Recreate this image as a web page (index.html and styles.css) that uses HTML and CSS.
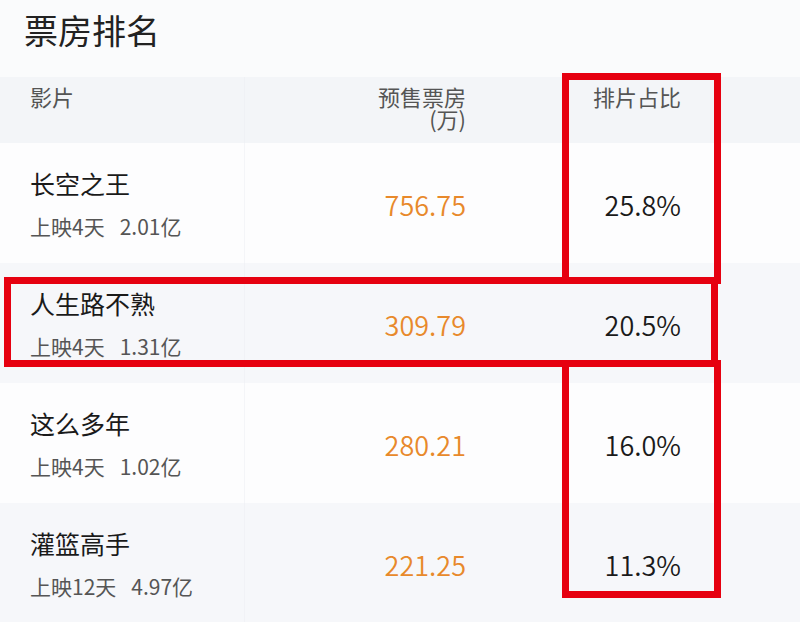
FILE: index.html
```html
<!DOCTYPE html>
<html lang="zh-CN">
<head>
<meta charset="utf-8">
<title>票房排名</title>
<link rel="stylesheet" href="styles.css">
</head>
<body>
<div class="page">
  <h1 class="title">票房排名</h1>
  <div class="table">
    <div class="row head">
      <div class="cell film">影片</div>
      <div class="cell num"><span class="hl">预售票房</span><span class="hl">(万)</span></div>
      <div class="cell pct">排片占比</div>
      <div class="cell rest"></div>
    </div>
    <div class="row">
      <div class="cell film"><div class="name">长空之王</div><div class="sub">上映4天<span class="gap">2.01亿</span></div></div>
      <div class="cell num"><span class="box">756.75</span></div>
      <div class="cell pct"><span class="ratio">25.8%</span></div>
      <div class="cell rest"></div>
    </div>
    <div class="row alt">
      <div class="cell film"><div class="name">人生路不熟</div><div class="sub">上映4天<span class="gap">1.31亿</span></div></div>
      <div class="cell num"><span class="box">309.79</span></div>
      <div class="cell pct"><span class="ratio">20.5%</span></div>
      <div class="cell rest"></div>
    </div>
    <div class="row">
      <div class="cell film"><div class="name">这么多年</div><div class="sub">上映4天<span class="gap">1.02亿</span></div></div>
      <div class="cell num"><span class="box">280.21</span></div>
      <div class="cell pct"><span class="ratio">16.0%</span></div>
      <div class="cell rest"></div>
    </div>
    <div class="row alt">
      <div class="cell film"><div class="name">灌篮高手</div><div class="sub">上映12天<span class="gap">4.97亿</span></div></div>
      <div class="cell num"><span class="box">221.25</span></div>
      <div class="cell pct"><span class="ratio">11.3%</span></div>
      <div class="cell rest"></div>
    </div>
  </div>
  <div class="mark mark-col-top"></div>
  <div class="mark mark-row"></div>
  <div class="mark mark-col-bottom"></div>
</div>
</body>
</html>
```

FILE: styles.css
```css
* { box-sizing: border-box; }
html, body {
  margin: 0;
  padding: 0;
  background: #fafbfc;
}
body {
  font-family: "Noto Sans CJK SC", "Noto Sans", sans-serif;
  color: #1c1c1c;
  width: 800px;
  height: 622px;
  overflow: hidden;
}
.page {
  position: relative;
  width: 800px;
  height: 622px;
}
.title {
  margin: 0;
  height: 77px;
  padding: 10px 0 0 24px;
  font-size: 34px;
  line-height: 40px;
  font-weight: 400;
  color: #222;
}
.table {
  display: flex;
  flex-direction: column;
}
.row {
  display: grid;
  grid-template-columns: 245px 221px 215px 1fr;
  height: 120px;
  background: #fdfdfe;
}
.row.alt { background: #f6f7fa; }
.row.head {
  height: 66px;
  background: #f3f5f8;
  font-size: 22px;
  line-height: 22px;
  color: #555;
}
.head .cell {
  padding-top: 8px;
  align-items: flex-start;
}
.head .film { padding-left: 30px; }
.cell {
  display: flex;
  align-items: center;
}
.cell.film {
  flex-direction: column;
  align-items: flex-start;
  justify-content: center;
  padding-left: 30px;
  border-right: 1px solid rgba(236, 238, 242, 0.5);
}
.head .cell.film { justify-content: flex-start; }
.cell.num, .cell.pct {
  justify-content: flex-end;
  text-align: right;
}
.head .cell.num {
  flex-direction: column;
  align-items: flex-end;
  justify-content: flex-start;
}
.hl {
  display: block;
  height: 22px;
  line-height: 22px;
}
.name {
  font-size: 25px;
  line-height: 34px;
  font-weight: 400;
  color: #1a1a1a;
}
.sub {
  margin-top: 11px;
  font-size: 21px;
  line-height: 30px;
  color: #555;
}
.gap { margin-left: 15px; }
.box {
  font-size: 27px;
  font-weight: 350;
  color: #e8892b;
  padding-top: 3px;
}
.ratio {
  font-size: 27px;
  font-weight: 350;
  color: #1a1a1a;
  padding-top: 3px;
}
.mark {
  position: absolute;
  border: 7px solid #e60010;
}
.mark-col-top {
  left: 562px;
  top: 73px;
  width: 159px;
  height: 211px;
}
.mark-row {
  left: 4px;
  top: 277px;
  width: 714px;
  height: 90px;
}
.mark-col-bottom {
  left: 562px;
  top: 360px;
  width: 159px;
  height: 238px;
}
```
